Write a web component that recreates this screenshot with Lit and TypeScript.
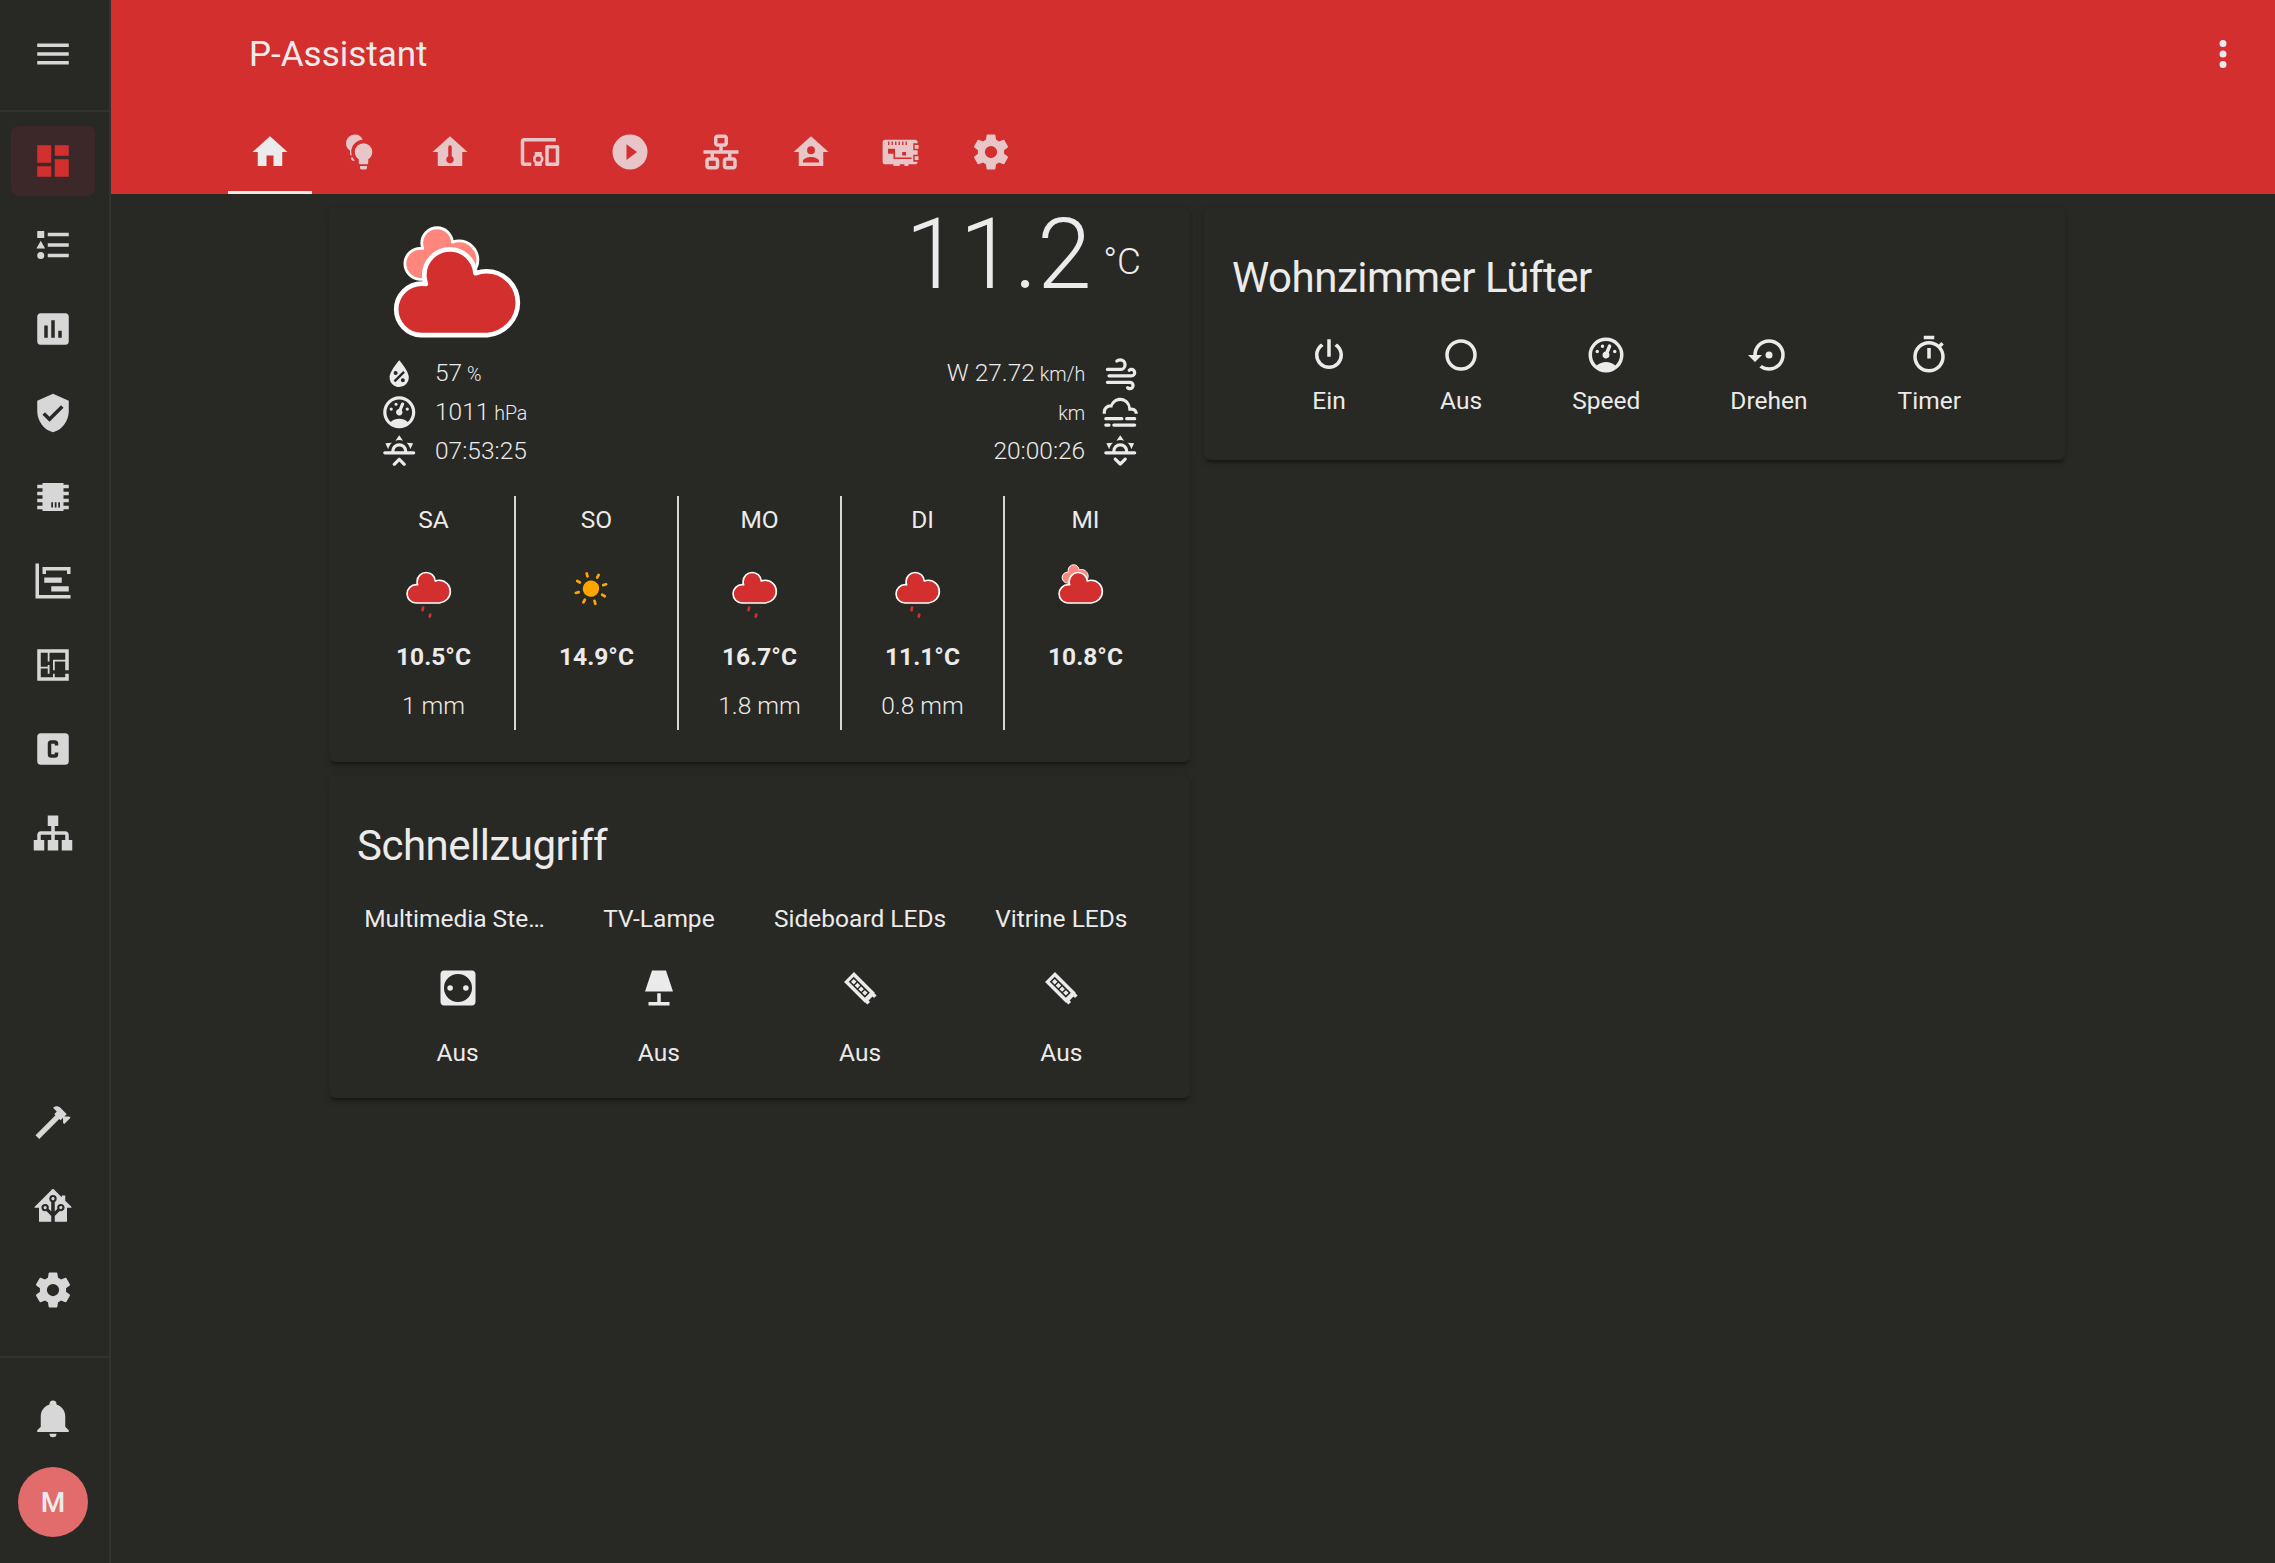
import { LitElement, html, svg, css } from "lit";
import { customElement, property } from "lit/decorators.js";

const SUN_BASE =
  "M3,12H7A5,5 0 0,1 12,7A5,5 0 0,1 17,12H21A1,1 0 0,1 22,13A1,1 0 0,1 21,14H3A1,1 0 0,1 2,13A1,1 0 0,1 3,12M15,12A3,3 0 0,0 12,9A3,3 0 0,0 9,12H15M12,2L14.39,5.42C13.65,5.15 12.84,5 12,5C11.16,5 10.35,5.15 9.61,5.42L12,2M3.34,7L7.5,6.65C6.9,7.16 6.36,7.78 5.94,8.5C5.5,9.24 5.25,10 5.11,10.79L3.34,7M20.65,7L18.88,10.79C18.74,10 18.47,9.23 18.05,8.5C17.63,7.78 17.1,7.15 16.5,6.64L20.65,7";
const HOUSE = "M12 3L2 12H5V20H19V12H22L12 3";

const PATHS: Record<string, string> = {
  menu: "M3,6H21V8H3V6M3,11H21V13H3V11M3,16H21V18H3V16Z",
  dashboard: "M13,3V9H21V3M13,21H21V11H13M3,21H11V15H3M3,13H11V3H3V13Z",
  list: "M5,9.5L7.5,14H2.5L5,9.5M3,4H7V8H3V4M5,20A2,2 0 0,0 7,18A2,2 0 0,0 5,16A2,2 0 0,0 3,18A2,2 0 0,0 5,20M9,5V7H21V5H9M9,19H21V17H9V19M9,13H21V11H9V13Z",
  chart: "M9,17H7V10H9V17M13,17H11V7H13V17M17,17H15V13H17V17M19,3H5A2,2 0 0,0 3,5V19A2,2 0 0,0 5,21H19A2,2 0 0,0 21,19V5A2,2 0 0,0 19,3Z",
  shield: "M10,17L6,13L7.41,11.59L10,14.17L16.59,7.58L18,9L10,17M12,1L3,5V11C3,16.55 6.84,21.74 12,23C17.16,21.74 21,16.55 21,11V5L12,1Z",
  chip: "M18 4H6V5H3V7H6V9H3V11H6V13H3V15H6V17H3V19H6V20H18V19H21V17H18V15H21V13H18V11H21V9H18V7H21V5H18V4M12 18H11V15H12V18M14 18H13V15H14V18M16 18H15V15H16V18Z",
  gantt: "M2,2H4V20H22V22H2V2M7,10H17V13H7V10M11,15H21V18H11V15M6,4H22V8H20V6H8V8H6V4Z",
  floorplan: "M10 5V10H9V5H5V13H9V12H10V17H9V14H5V19H12V17H13V19H19V17H21V21H3V3H21V15H19V10H13V15H12V9H19V5H10Z",
  cbox: "M5,3H19A2,2 0 0,1 21,5V19A2,2 0 0,1 19,21H5A2,2 0 0,1 3,19V5A2,2 0 0,1 5,3M11,7A2,2 0 0,0 9,9V15A2,2 0 0,0 11,17H13A2,2 0 0,0 15,15V14H13V15H11V9H13V10H15V9A2,2 0 0,0 13,7H11Z",
  sitemap: "M9,2V8H11V11H5C3.89,11 3,11.89 3,13V16H1V22H7V16H5V13H11V16H9V22H15V16H13V13H19V16H17V22H23V16H21V13C21,11.89 20.11,11 19,11H13V8H15V2H9Z",
  hammer: "M2 19.63L13.43 8.2L12.72 7.5L14.14 6.07L12 3.89C13.2 2.7 15.09 2.7 16.27 3.89L19.87 7.5L18.45 8.91H21.29L22 9.62L18.45 13.21L17.74 12.5V9.62L16.27 11.04L15.56 10.33L4.13 21.76L2 19.63Z",
  assistant: "M21.8,13H20V21H13V17.67L15.79,14.88L16.5,15C17.66,15 18.6,14.06 18.6,12.9C18.6,11.74 17.66,10.8 16.5,10.8A2.1,2.1 0 0,0 14.4,12.9L14.5,13.61L13,15.13V9.65C13.66,9.29 14.1,8.6 14.1,7.8A2.1,2.1 0 0,0 12,5.7A2.1,2.1 0 0,0 9.9,7.8C9.9,8.6 10.34,9.29 11,9.65V15.13L9.5,13.61L9.6,12.9A2.1,2.1 0 0,0 7.5,10.8A2.1,2.1 0 0,0 5.4,12.9A2.1,2.1 0 0,0 7.5,15L8.21,14.88L11,17.67V21H4V13H2.25C1.83,13 1.42,13 1.42,12.79C1.43,12.57 1.85,12.15 2.28,11.72L11,3C11.33,2.67 11.67,2.33 12,2.33C12.33,2.33 12.67,2.67 13,3L17,7V6H19V9L21.78,11.78C22.18,12.18 22.59,12.59 22.6,12.8C22.6,13 22.2,13 21.8,13M7.5,12A0.9,0.9 0 0,1 8.4,12.9A0.9,0.9 0 0,1 7.5,13.8A0.9,0.9 0 0,1 6.6,12.9A0.9,0.9 0 0,1 7.5,12M16.5,12C17,12 17.4,12.4 17.4,12.9C17.4,13.4 17,13.8 16.5,13.8A0.9,0.9 0 0,1 15.6,12.9A0.9,0.9 0 0,1 16.5,12M12,6.9C12.5,6.9 12.9,7.3 12.9,7.8C12.9,8.3 12.5,8.7 12,8.7C11.5,8.7 11.1,8.3 11.1,7.8C11.1,7.3 11.5,6.9 12,6.9Z",
  cog: "M12,15.5A3.5,3.5 0 0,1 8.5,12A3.5,3.5 0 0,1 12,8.5A3.5,3.5 0 0,1 15.5,12A3.5,3.5 0 0,1 12,15.5M19.43,12.97C19.47,12.65 19.5,12.33 19.5,12C19.5,11.67 19.47,11.34 19.43,11L21.54,9.37C21.73,9.22 21.78,8.95 21.66,8.73L19.66,5.27C19.54,5.05 19.27,4.96 19.05,5.05L16.56,6.05C16.04,5.66 15.5,5.32 14.87,5.07L14.5,2.42C14.46,2.18 14.25,2 14,2H10C9.75,2 9.54,2.18 9.5,2.42L9.13,5.07C8.5,5.32 7.96,5.66 7.44,6.05L4.95,5.05C4.73,4.96 4.46,5.05 4.34,5.27L2.34,8.73C2.21,8.95 2.27,9.22 2.46,9.37L4.57,11C4.53,11.34 4.5,11.67 4.5,12C4.5,12.33 4.53,12.65 4.57,12.97L2.46,14.63C2.27,14.78 2.21,15.05 2.34,15.27L4.34,18.73C4.46,18.95 4.73,19.03 4.95,18.95L7.44,17.94C7.96,18.34 8.5,18.68 9.13,18.93L9.5,21.58C9.54,21.82 9.75,22 10,22H14C14.25,22 14.46,21.82 14.5,21.58L14.87,18.93C15.5,18.67 16.04,18.34 16.56,17.94L19.05,18.95C19.27,19.03 19.54,18.95 19.66,18.73L21.66,15.27C21.78,15.05 21.73,14.78 21.54,14.63L19.43,12.97Z",
  bell: "M21,19V20H3V19L5,17V11C5,7.9 7.03,5.17 10,4.29C10,4.19 10,4.1 10,4A2,2 0 0,1 12,2A2,2 0 0,1 14,4C14,4.1 14,4.19 14,4.29C16.97,5.17 19,7.9 19,11V17L21,19M14,21A2,2 0 0,1 12,23A2,2 0 0,1 10,21",
  home: "M10,20V14H14V20H19V12H22L12,3L2,12H5V20H10Z",
  bulbs: "M14 7A5 5 0 0 0 9 12C9 13.8 9.9 15.3 11.3 16.2V18.2C11.3 18.7 11.6 19 12 19H16C16.4 19 16.7 18.7 16.7 18.2V16.2C18.1 15.3 19 13.8 19 12A5 5 0 0 0 14 7M12 20V21C12 21.6 12.4 22 13 22H15C15.6 22 16 21.6 16 21V20H12M9 2A5 5 0 0 0 4 7C4 8.8 4.9 10.3 6.3 11.2V13.2C6.3 13.7 6.6 14 7 14H7.3A7 7 0 0 1 7 12A7 7 0 0 1 13.6 5A5 5 0 0 0 9 2M7 15V16C7 16.6 7.4 17 8 17H9.1A7 7 0 0 1 7.7 15H7Z",
  thermo: HOUSE + "M11 9.2A1 1 0 0 1 13 9.2V14.4A2.15 2.15 0 1 1 11 14.4V9.2Z",
  devices: "M3,6H21V4H3A2,2 0 0,0 1,6V18A2,2 0 0,0 3,20H7V18H3V6M13,12H9V13.78C8.39,14.33 8,15.11 8,16C8,16.89 8.39,17.67 9,18.22V20H13V18.22C13.61,17.67 14,16.88 14,16C14,15.12 13.61,14.33 13,13.78V12M11,17.5A1.5,1.5 0 0,1 9.5,16A1.5,1.5 0 0,1 11,14.5A1.5,1.5 0 0,1 12.5,16A1.5,1.5 0 0,1 11,17.5M22,8H16A1,1 0 0,0 15,9V19A1,1 0 0,0 16,20H22A1,1 0 0,0 23,19V9A1,1 0 0,0 22,8M21,18H17V10H21V18Z",
  play: "M10,16.5V7.5L16,12L10,16.5M12,2A10,10 0 0,0 2,12A10,10 0 0,0 12,22A10,10 0 0,0 22,12A10,10 0 0,0 12,2Z",
  lan: "M10,2C8.89,2 8,2.89 8,4V7C8,8.11 8.89,9 10,9H11V11H2V13H6V15H5C3.89,15 3,15.89 3,17V20C3,21.11 3.89,22 5,22H9C10.11,22 11,21.11 11,20V17C11,15.89 10.11,15 9,15H8V13H16V15H15C13.89,15 13,15.89 13,17V20C13,21.11 13.89,22 15,22H19C20.11,22 21,21.11 21,20V17C21,15.89 20.11,15 19,15H18V13H22V11H13V9H14C15.11,9 16,8.11 16,7V4C16,2.89 15.11,2 14,2H10M10,4H14V7H10V4M5,17H9V20H5V17M15,17H19V20H15V17Z",
  person: HOUSE + "M12 8.75A2.25 2.25 0 0 1 14.25 11A2.25 2.25 0 0 1 12 13.25A2.25 2.25 0 0 1 9.75 11A2.25 2.25 0 0 1 12 8.75M12 14.8C13.5 14.8 16.6 15.6 16.6 17.2V18H7.4V17.2C7.4 15.6 10.5 14.8 12 14.8Z",
  board: "M3 5H20C20.9 5 21.5 5.6 21.5 6.5V7H19V11H21.5V13.5H19V17.5H21.5C21.4 18.4 20.9 19 20 19H16.2V20H14V19H11.3V20H7.7V19H3C2 19 1.5 18.4 1.5 17.5V6.5C1.5 5.6 2 5 3 5M4.6 6V8H5.4V6H4.6M6.6 6V8H7.4V6H6.6M8.6 6V8H9.4V6H8.6M10.6 6V8H11.4V6H10.6M12.6 6V8H13.4V6H12.6M14.6 6V8H15.4V6H14.6M4.6 10.2V13H7.7V16H18V15.2H8.6V10.2H4.6M12.7 12H14.9V14H12.7V12M19.8 8H22V10.2H19.8V8M19.8 14.4H22V16.6H19.8V14.4Z",
  dots: "M12,16A2,2 0 0,1 14,18A2,2 0 0,1 12,20A2,2 0 0,1 10,18A2,2 0 0,1 12,16M12,10A2,2 0 0,1 14,12A2,2 0 0,1 12,14A2,2 0 0,1 10,12A2,2 0 0,1 12,10M12,4A2,2 0 0,1 14,6A2,2 0 0,1 12,8A2,2 0 0,1 10,6A2,2 0 0,1 12,4Z",
  humidity: "M12,3.25C12,3.25 6,10 6,14C6,17.32 8.69,20 12,20A6,6 0 0,0 18,14C18,10 12,3.25 12,3.25M14.47,9.97L15.53,11.03L9.53,17.03L8.47,15.97M9.75,10A1.25,1.25 0 0,1 11,11.25A1.25,1.25 0 0,1 9.75,12.5A1.25,1.25 0 0,1 8.5,11.25A1.25,1.25 0 0,1 9.75,10M14.25,14.5A1.25,1.25 0 0,1 15.5,15.75A1.25,1.25 0 0,1 14.25,17A1.25,1.25 0 0,1 13,15.75A1.25,1.25 0 0,1 14.25,14.5Z",
  gauge: "M12,2A10,10 0 0,0 2,12A10,10 0 0,0 12,22A10,10 0 0,0 22,12A10,10 0 0,0 12,2M12,4A8,8 0 0,1 20,12C20,14.4 19,16.5 17.3,18C15.9,16.7 14,16 12,16C10,16 8.2,16.7 6.7,18C5,16.5 4,14.4 4,12A8,8 0 0,1 12,4M14,5.89C13.62,5.9 13.26,6.15 13.1,6.54L11.81,9.77L11.71,10C11,10.13 10.41,10.6 10.14,11.26C9.73,12.29 10.23,13.45 11.26,13.86C12.29,14.27 13.45,13.77 13.86,12.74C14.12,12.08 14,11.32 13.57,10.76L13.67,10.5L14.96,7.29L14.97,7.26C15.17,6.75 14.92,6.17 14.41,5.96C14.28,5.91 14.15,5.89 14,5.89M10,6A1,1 0 0,0 9,7A1,1 0 0,0 10,8A1,1 0 0,0 11,7A1,1 0 0,0 10,6M7,9A1,1 0 0,0 6,10A1,1 0 0,0 7,11A1,1 0 0,0 8,10A1,1 0 0,0 7,9M17,9A1,1 0 0,0 16,10A1,1 0 0,0 17,11A1,1 0 0,0 18,10A1,1 0 0,0 17,9Z",
  sunrise: SUN_BASE + "M12.71,16.3L15.82,19.41C16.21,19.8 16.21,20.43 15.82,20.82C15.43,21.21 14.8,21.21 14.41,20.82L12,18.41L9.59,20.82C9.2,21.21 8.57,21.21 8.18,20.82C7.79,20.43 7.79,19.8 8.18,19.41L11.29,16.3C11.5,16.1 11.74,16 12,16C12.26,16 12.5,16.1 12.71,16.3Z",
  sunset: SUN_BASE + "M12.71,20.71L15.82,17.6C16.21,17.21 16.21,16.57 15.82,16.18C15.43,15.79 14.8,15.79 14.41,16.18L12,18.59L9.59,16.18C9.2,15.79 8.57,15.79 8.18,16.18C7.79,16.57 7.79,17.21 8.18,17.6L11.29,20.71C11.5,20.9 11.74,21 12,21C12.26,21 12.5,20.9 12.71,20.71Z",
  wind: "M4,10A1,1 0 0,1 3,9A1,1 0 0,1 4,8H12A2,2 0 0,0 14,6A2,2 0 0,0 12,4C11.45,4 10.95,4.22 10.59,4.59C10.2,5 9.56,5 9.17,4.59C8.78,4.2 8.78,3.56 9.17,3.17C9.9,2.45 10.9,2 12,2A4,4 0 0,1 16,6A4,4 0 0,1 12,10H4M19,12A1,1 0 0,0 20,11A1,1 0 0,0 19,10C18.72,10 18.47,10.11 18.29,10.29C17.9,10.68 17.27,10.68 16.88,10.29C16.5,9.9 16.5,9.27 16.88,8.88C17.42,8.34 18.17,8 19,8A3,3 0 0,1 22,11A3,3 0 0,1 19,14H5A1,1 0 0,1 4,13A1,1 0 0,1 5,12H19M18,18H4A1,1 0 0,1 3,17A1,1 0 0,1 4,16H18A3,3 0 0,1 21,19A3,3 0 0,1 18,22C17.17,22 16.42,21.66 15.88,21.12C15.5,20.73 15.5,20.1 15.88,19.71C16.27,19.32 16.9,19.32 17.29,19.71C17.47,19.89 17.72,20 18,20A1,1 0 0,0 19,19A1,1 0 0,0 18,18Z",
  fog: "M3,15H13A1,1 0 0,1 14,16A1,1 0 0,1 13,17H3A1,1 0 0,1 2,16A1,1 0 0,1 3,15M16,15H21A1,1 0 0,1 22,16A1,1 0 0,1 21,17H16A1,1 0 0,1 15,16A1,1 0 0,1 16,15M1,12A5,5 0 0,1 6,7C7,4.65 9.3,3 12,3C15.43,3 18.24,5.66 18.5,9.03L19,9C21.19,9 22.97,10.76 23,13H21A2,2 0 0,0 19,11H17V10A5,5 0 0,0 12,5C9.5,5 7.45,6.82 7.06,9.19C6.73,9.07 6.37,9 6,9A3,3 0 0,0 3,12C3,12.35 3.06,12.69 3.17,13H1.1L1,12M3,19H5A1,1 0 0,1 6,20A1,1 0 0,1 5,21H3A1,1 0 0,1 2,20A1,1 0 0,1 3,19M8,19H21A1,1 0 0,1 22,20A1,1 0 0,1 21,21H8A1,1 0 0,1 7,20A1,1 0 0,1 8,19Z",
  socket: "M4 2C2.9 2 2 2.9 2 4V20C2 21.1 2.9 22 4 22H20C21.1 22 22 21.1 22 20V4C22 2.9 21.1 2 20 2H4M12 4A8 8 0 0 1 20 12A8 8 0 0 1 12 20A8 8 0 0 1 4 12A8 8 0 0 1 12 4M7.5 10.4A1.6 1.6 0 0 0 7.5 13.6A1.6 1.6 0 0 0 7.5 10.4M16.5 10.4A1.6 1.6 0 0 0 16.5 13.6A1.6 1.6 0 0 0 16.5 10.4Z",
  lamp: "M8,2H16L20,14H4L8,2M11,15H13V20H18V22H6V20H11V15Z",
  led: "M8.1 -4H24.9V-3.7H26.7V-1.6H25.5V1.6H26.7V3.7H24.9V4H8.1V-4M9.9 -2V2H22.9V-2H9.9M10.8 -1.1H13V1.1H10.8V-1.1M13.8 -1.1H16V1.1H13.8V-1.1M16.8 -1.1H19V1.1H16.8V-1.1M19.8 -1.1H22V1.1H19.8V-1.1Z",
  power: "M16.56,5.44L15.11,6.89C16.84,7.94 18,9.83 18,12A6,6 0 0,1 12,18A6,6 0 0,1 6,12C6,9.83 7.16,7.94 8.88,6.88L7.44,5.44C5.36,6.88 4,9.28 4,12A8,8 0 0,0 12,20A8,8 0 0,0 20,12C20,9.28 18.64,6.88 16.56,5.44M13,3H11V13H13",
  circle: "M12 3A9 9 0 0 0 12 21A9 9 0 0 0 12 3M12 5A7 7 0 0 1 12 19A7 7 0 0 1 12 5Z",
  restore: "M14,12A2,2 0 0,0 12,10A2,2 0 0,0 10,12A2,2 0 0,0 12,14A2,2 0 0,0 14,12M12,3A9,9 0 0,0 3,12H0L4,16L8,12H5A7,7 0 0,1 12,5A7,7 0 0,1 19,12A7,7 0 0,1 12,19C10.5,19 9.09,18.5 7.94,17.7L6.5,19.14C8.04,20.3 9.94,21 12,21A9,9 0 0,0 21,12A9,9 0 0,0 12,3Z",
  timer: "M12,20A7,7 0 0,1 5,13A7,7 0 0,1 12,6A7,7 0 0,1 19,13A7,7 0 0,1 12,20M19.03,7.39L20.45,5.97C20,5.46 19.55,5 19.04,4.56L17.62,6C16.07,4.74 14.12,4 12,4A9,9 0 0,0 3,13A9,9 0 0,0 12,22C17,22 21,17.97 21,13C21,10.88 20.26,8.93 19.03,7.39M11,14H13V8H11M15,1H9V3H15V1Z",
};

@customElement("ui-icon")
class UiIcon extends LitElement {
  @property() name = "";
  static styles = css`
    :host { display: block; flex: none; width: 42px; height: 42px; }
    svg { display: block; width: 100%; height: 100%; fill: currentColor; overflow: visible; }
  `;
  render() {
    return html`<svg viewBox="0 0 24 24">
      <path fill-rule="evenodd" transform=${this.name === "led" ? "rotate(45)" : "rotate(0)"} d=${PATHS[this.name] ?? ""}></path>
    </svg>`;
  }
}

const CLOUD =
  "m47.7 35.4c0-4.6-3.7-8.2-8.2-8.2c-1 0-1.9 .2-2.8 .5c-.3-3.4-3.1-6.2-6.6-6.2c-3.7 0-6.7 3-6.7 6.7c0 .8 .2 1.6 .4 2.3c-.3-.1-.7-.1-1-.1c-3.7 0-6.7 3-6.7 6.7c0 3.6 2.9 6.6 6.5 6.7l17.2 0C44.2 43.3 47.7 39.8 47.7 35.4Z";

@customElement("weather-icon")
class WeatherIcon extends LitElement {
  @property() kind = "cloudy";
  @property() box = "0 0 64 64";
  static styles = css`
    :host { display: block; }
    svg { display: block; width: 100%; height: 100%; }
    .cloud { fill: #d32f2f; stroke: #fff; stroke-width: 1.2; stroke-linejoin: round; }
    .back { fill: #ff867c; }
    .drop { stroke: #d32f2f; stroke-width: 2; stroke-linecap: round; }
    .sun { fill: orange; }
    .ray { stroke: orange; stroke-width: 2; stroke-linecap: round; }
  `;
  render() {
    if (this.kind === "sunny") {
      return html`<svg viewBox=${this.box}>
        <g transform="translate(31.4 33.3) rotate(-16)">
          <circle class="sun" r="6"></circle>
          ${[0, 45, 90, 135, 180, 225, 270, 315].map(
            (a) => svg`<line class="ray" y1="-9.3" y2="-11.5" transform="rotate(${a})"></line>`
          )}
        </g>
      </svg>`;
    }
    return html`<svg viewBox=${this.box}>
      ${this.kind === "cloudy"
        ? svg`<path class="cloud back" transform="translate(8.7 3) scale(.6)" d=${CLOUD}></path>`
        : svg`<line class="drop" x1="27.8" y1="47.1" x2="27.4" y2="49.1"></line>
              <line class="drop" x1="33" y1="52.2" x2="32.7" y2="53.8"></line>`}
      <path class="cloud" d=${CLOUD}></path>
    </svg>`;
  }
}

const NAV = ["dashboard", "list", "chart", "shield", "chip", "gantt", "floorplan", "cbox", "sitemap"];
const NAV_BOTTOM = ["hammer", "assistant", "cog"];
const TABS = ["home", "bulbs", "thermo", "devices", "play", "lan", "person", "board", "cog"];
const FORECAST = [
  { day: "SA", kind: "rainy", temp: "10.5°C", rain: "1 mm" },
  { day: "SO", kind: "sunny", temp: "14.9°C", rain: "" },
  { day: "MO", kind: "rainy", temp: "16.7°C", rain: "1.8 mm" },
  { day: "DI", kind: "rainy", temp: "11.1°C", rain: "0.8 mm" },
  { day: "MI", kind: "cloudy", temp: "10.8°C", rain: "" },
];
const LEFT = [
  { icon: "humidity", value: "57", unit: "%" },
  { icon: "gauge", value: "1011", unit: "hPa" },
  { icon: "sunrise", value: "07:53:25", unit: "" },
];
const RIGHT = [
  { icon: "wind", value: "W 27.72", unit: "km/h" },
  { icon: "fog", value: "", unit: "km" },
  { icon: "sunset", value: "20:00:26", unit: "" },
];
const QUICK = [
  { name: "Multimedia Ste…", icon: "socket" },
  { name: "TV-Lampe", icon: "lamp" },
  { name: "Sideboard LEDs", icon: "led" },
  { name: "Vitrine LEDs", icon: "led" },
];
const FAN = [
  { label: "Ein", icon: "power" },
  { label: "Aus", icon: "circle" },
  { label: "Speed", icon: "gauge" },
  { label: "Drehen", icon: "restore" },
  { label: "Timer", icon: "timer" },
];

@customElement("app-root")
class AppRoot extends LitElement {
  static styles = css`
    :host {
      display: flex;
      width: 100%;
      height: 100vh;
      overflow: hidden;
      background: #282824;
      color: #ebebeb;
      font: 400 24.5px/28px Roboto, "Liberation Sans", sans-serif;
    }
    * { box-sizing: border-box; }
    .sidebar {
      flex: none;
      width: 111px;
      border-right: 2px solid #323233;
      display: flex;
      flex-direction: column;
      color: #d7d7d7;
    }
    .side-head {
      height: 112px;
      border-bottom: 2px solid #323233;
      padding: 33px 0 0 32px;
    }
    .nav { display: flex; flex-direction: column; gap: 14px; padding: 14px 0 0 11px; }
    .nav.main { flex: 1; }
    .nav.lower { padding-bottom: 31px; }
    .nav.foot { border-top: 2px solid #323233; padding-top: 25px; padding-bottom: 26px; }
    .item {
      width: 84px;
      height: 70px;
      border-radius: 7px;
      display: flex;
      align-items: center;
      justify-content: center;
    }
    .item.active { background: #3c2829; color: #d32f2f; }
    .avatar {
      width: 70px;
      height: 70px;
      margin-left: 7px;
      padding-top: 1px;
      border-radius: 50%;
      background: #e26c6c;
      color: #ebebeb;
      font-size: 28px;
      font-weight: 500;
      display: flex;
      align-items: center;
      justify-content: center;
    }
    .main-area { flex: 1; min-width: 0; }
    .header {
      height: 194px;
      background: #d32f2f;
      display: flex;
      flex-direction: column;
      justify-content: space-between;
    }
    .toolbar {
      display: flex;
      justify-content: space-between;
      align-items: center;
      height: 108px;
      padding: 0 31px 0 138px;
      font-size: 35px;
      line-height: 40px;
    }
    .toolbar span { padding-top: 2px; }
    .tabs { display: flex; padding-left: 114px; }
    .tab {
      width: 90.1px;
      height: 84px;
      padding: 21px 3px 0;
      display: flex;
      flex-direction: column;
      align-items: center;
      justify-content: space-between;
      color: #e8c6c8;
    }
    .tab.active { color: #ebebeb; }
    .tab.active::after { content: ""; width: 84px; height: 3px; background: #ebebeb; }
    .view { display: flex; align-items: flex-start; padding: 7px 0 0 211px; }
    .column { width: 875px; display: flex; flex-direction: column; }
    .card {
      margin: 7px;
      border-radius: 7px;
      box-shadow: 0 3.5px 3.5px rgba(0, 0, 0, 0.14), 0 1.75px 8.75px rgba(0, 0, 0, 0.12),
        0 5.25px 1.75px -3.5px rgba(0, 0, 0, 0.2);
    }
    .title {
      font-size: 42px;
      line-height: 50px;
      letter-spacing: -0.504px;
      padding: 45px 28px 0;
    }
    .weather { height: 554px; padding: 0 24px; }
    .current { display: flex; justify-content: space-between; height: 145px; padding: 0 25px 0 40px; }
    .current weather-icon { width: 128px; height: 114px; margin-top: 17px; }
    .temp { display: flex; font-weight: 300; font-size: 98px; line-height: 90px; padding-top: 2px; }
    .temp .deg { font-size: 36.75px; line-height: 40px; padding: 32px 0 0 11.5px; }
    .details { display: flex; justify-content: space-between; padding: 0 27px; font-weight: 300; }
    .row { display: flex; align-items: center; height: 38.8px; gap: 16.5px; }
    .row ui-icon { width: 38.5px; height: 38.5px; margin-top: 3px; }
    .row > span { padding-top: 3px; }
    .row.end { flex-direction: row-reverse; gap: 15.3px; }
    .unit { font-size: 19.6px; white-space: pre; }
    .forecast { display: flex; margin-top: 26.6px; height: 234px; }
    .day {
      width: 163px;
      flex: none;
      border-right: 2px solid #d7d7d7;
      padding-top: 10px;
      text-align: center;
    }
    .day:last-child { border-color: transparent; }
    .day weather-icon { width: 87.7px; height: 87.7px; margin: 9.4px auto 11.8px 32.2px; }
    .high { font-weight: 700; }
    .rain { font-weight: 300; margin-top: 21.4px; }
    .quick { height: 322px; }
    .entities { display: grid; grid-template-columns: repeat(4, 201.25px); padding: 34.3px 28px 0; }
    .entity { display: flex; flex-direction: column; align-items: center; white-space: nowrap; }
    .entity:first-child .name { width: 187px; }
    .entity ui-icon { margin: 33.7px 0 29.6px; }
    .fan { height: 252px; }
    .buttons { display: flex; justify-content: space-around; padding: 31px 59px 0; }
    .button { display: flex; flex-direction: column; align-items: center; gap: 10.5px; }
  `;

  render() {
    return html`
      <aside class="sidebar">
        <div class="side-head"><ui-icon name="menu"></ui-icon></div>
        <nav class="nav main">
          ${NAV.map((n, i) => html`<div class="item ${i === 0 ? "active" : ""}"><ui-icon name=${n}></ui-icon></div>`)}
        </nav>
        <nav class="nav lower">
          ${NAV_BOTTOM.map((n) => html`<div class="item"><ui-icon name=${n}></ui-icon></div>`)}
        </nav>
        <div class="nav foot">
          <div class="item"><ui-icon name="bell"></ui-icon></div>
          <div class="avatar">M</div>
        </div>
      </aside>
      <main class="main-area">
        <header class="header">
          <div class="toolbar"><span>P-Assistant</span><ui-icon name="dots"></ui-icon></div>
          <div class="tabs">
            ${TABS.map((n, i) => html`<div class="tab ${i === 0 ? "active" : ""}"><ui-icon name=${n}></ui-icon></div>`)}
          </div>
        </header>
        <div class="view">
          <div class="column">
            <section class="card weather">
              <div class="current">
                <weather-icon kind="cloudy" box="15.27 15.19 33.25 29.6"></weather-icon>
                <div class="temp"><span>11.2</span><span class="deg">°C</span></div>
              </div>
              <div class="details">
                <div>${LEFT.map((d) => this.detail(d, ""))}</div>
                <div>${RIGHT.map((d) => this.detail(d, "end"))}</div>
              </div>
              <div class="forecast">
                ${FORECAST.map(
                  (f) => html`<div class="day">
                    <div>${f.day}</div>
                    <weather-icon kind=${f.kind}></weather-icon>
                    <div class="high">${f.temp}</div>
                    <div class="rain">${f.rain}</div>
                  </div>`
                )}
              </div>
            </section>
            <section class="card quick">
              <div class="title">Schnellzugriff</div>
              <div class="entities">
                ${QUICK.map(
                  (q) => html`<div class="entity">
                    <div class="name">${q.name}</div>
                    <ui-icon name=${q.icon}></ui-icon>
                    <div>Aus</div>
                  </div>`
                )}
              </div>
            </section>
          </div>
          <div class="column">
            <section class="card fan">
              <div class="title">Wohnzimmer Lüfter</div>
              <div class="buttons">
                ${FAN.map((b) => html`<div class="button"><ui-icon name=${b.icon}></ui-icon><span>${b.label}</span></div>`)}
              </div>
            </section>
          </div>
        </div>
      </main>
    `;
  }

  private detail(d: { icon: string; value: string; unit: string }, side: string) {
    return html`<div class="row ${side}">
      <ui-icon name=${d.icon}></ui-icon>
      <span>${d.value}${d.unit ? html`<span class="unit">${(d.value ? " " : "") + d.unit}</span>` : ""}</span>
    </div>`;
  }
}
